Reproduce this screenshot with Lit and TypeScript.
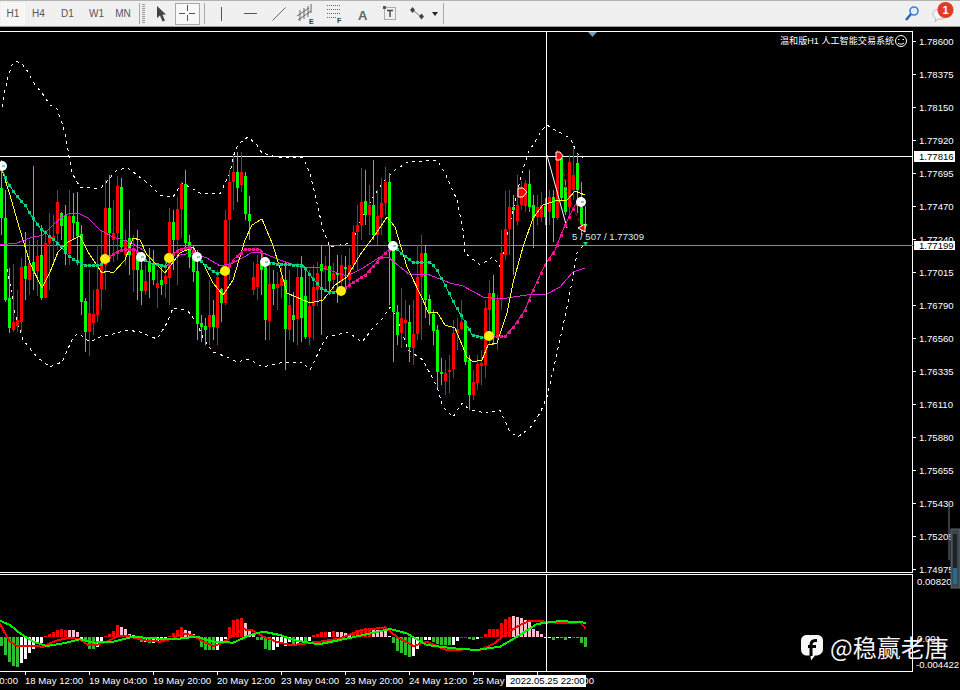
import { LitElement, html, svg, css } from 'lit';
import { customElement } from 'lit/decorators.js';

type Pt = [number, number];

// x, colour, body top, body bottom, wick top, wick bottom
const CANDLES: [number, string, number, number, number, number][] = [
  [1,'g',188,218,160,235],[5,'g',218,300,190,302],[9,'g',298,328,268,333],[13,'r',322,330,264,332],
  [17,'r',320,326,290,332],[21,'r',267,322,258,332],[25,'g',266,279,232,300],[29,'r',263,280,240,295],
  [33,'g',262,271,166,290],[37,'r',256,271,240,296],[41,'g',255,298,225,300],[45,'r',243,298,230,298],
  [49,'r',238,243,213,290],[53,'r',236,240,215,265],[57,'r',202,234,190,250],[61,'g',213,226,212,240],
  [65,'g',215,254,205,265],[69,'r',216,254,190,265],[73,'g',216,223,193,240],[77,'g',222,236,192,265],
  [81,'g',234,302,225,315],[85,'g',301,332,298,352],[89,'r',313,332,270,356],[93,'r',314,323,290,335],
  [97,'r',289,315,245,322],[101,'r',265,289,230,310],[105,'r',208,265,180,290],[109,'g',208,233,175,262],
  [113,'r',233,240,200,262],[117,'r',186,233,176,260],[121,'g',187,247,178,250],[125,'r',240,255,230,265],
  [129,'g',238,255,210,275],[133,'r',248,270,235,292],[137,'g',257,270,230,300],[141,'g',270,291,257,305],
  [145,'r',281,291,265,295],[149,'g',264,272,248,298],[153,'g',263,280,250,285],[157,'r',283,288,270,308],
  [161,'g',280,285,265,295],[165,'r',276,284,262,298],[169,'r',222,278,208,305],[173,'g',222,240,210,270],
  [177,'r',209,240,197,285],[181,'r',184,209,182,238],[185,'g',184,243,170,250],[189,'g',242,257,235,268],
  [193,'g',255,272,245,282],[197,'g',271,324,250,340],[201,'g',323,327,315,342],[205,'g',326,330,318,345],
  [209,'r',315,327,280,345],[213,'g',315,327,300,340],[217,'r',277,328,270,345],[221,'g',289,303,288,322],
  [225,'r',220,303,210,305],[229,'r',182,220,170,280],[233,'r',172,182,155,210],[237,'g',172,188,152,202],
  [241,'r',172,185,152,192],[245,'g',176,214,172,220],[249,'g',214,221,196,240],[253,'r',277,290,262,295],
  [257,'r',264,287,255,300],[261,'g',264,270,250,295],[265,'g',267,320,265,340],[269,'r',284,321,262,340],
  [273,'g',284,289,270,305],[277,'r',284,288,272,310],[281,'r',278,286,267,298],[285,'g',280,329,262,370],
  [289,'r',305,330,270,340],[293,'g',315,320,292,342],[297,'r',277,319,263,345],[301,'g',277,318,256,342],
  [305,'g',296,337,270,339],[309,'r',306,337,270,345],[313,'r',287,306,265,340],[317,'r',273,290,262,306],
  [321,'g',264,271,245,335],[325,'r',266,270,256,290],[329,'g',266,281,245,295],[333,'r',273,280,263,290],
  [337,'g',273,275,255,303],[341,'r',265,281,255,295],[345,'g',267,269,256,287],[349,'r',265,280,248,288],
  [353,'r',232,265,225,270],[357,'r',225,232,205,270],[361,'r',202,225,168,240],[365,'g',201,215,170,225],
  [369,'r',205,215,185,235],[373,'g',205,235,160,240],[377,'r',216,235,190,245],[381,'r',203,217,178,235],
  [385,'r',182,203,167,215],[389,'g',182,242,173,305],[393,'g',247,312,245,362],[397,'g',312,335,305,345],
  [401,'r',318,333,288,348],[405,'r',320,323,300,340],[409,'g',322,347,305,362],[413,'r',334,348,300,365],
  [417,'r',277,334,245,340],[421,'r',253,277,235,340],[425,'g',253,300,245,318],[429,'g',299,314,295,325],
  [433,'g',314,331,310,345],[437,'g',330,372,325,388],[441,'g',372,374,358,385],[445,'r',373,381,360,395],
  [449,'r',370,372,355,393],[453,'r',333,369,320,378],[457,'r',329,333,318,350],[461,'r',322,329,300,330],
  [465,'g',322,362,320,365],[469,'g',360,395,355,410],[473,'r',382,395,370,400],[477,'r',364,383,355,390],
  [481,'r',363,366,350,385],[485,'r',308,365,300,378],[489,'r',293,310,280,345],[493,'g',293,335,275,345],
  [497,'r',300,335,295,350],[501,'r',253,300,230,310],[505,'r',229,255,191,260],[509,'r',207,229,190,255],
  [513,'g',207,210,195,275],[517,'r',205,221,175,225],[521,'r',190,205,181,210],[525,'r',183,206,180,212],
  [529,'g',184,207,170,212],[533,'g',205,218,195,248],[537,'r',207,217,195,225],[541,'r',205,217,192,222],
  [545,'g',206,217,198,225],[549,'r',197,212,190,225],[553,'g',197,218,190,242],[557,'r',155,218,150,220],
  [561,'g',158,198,155,200],[565,'g',187,212,180,215],[569,'r',162,207,155,215],[573,'r',175,190,148,200],
  [577,'g',163,190,155,213],[581,'g',207,225,182,235],[585,'g',224,226,206,228],
];

const BB_UPPER: Pt[] = [[2,107],[5,90],[8,77],[12,65],[16,61],[22,64],[28,72],[33,82],[42,93],[50,105],[57,109],[62,123],[66,137],[68,150],[72,173],[80,187],[100,189],[110,178],[117,170],[128,168],[137,175],[150,185],[160,195],[173,197],[182,183],[195,190],[200,193],[220,194],[230,173],[235,150],[240,143],[248,137],[257,145],[262,153],[277,157],[303,158],[310,173],[317,203],[323,230],[330,247],[340,245],[352,243],[363,215],[373,197],[385,180],[395,170],[408,162],[437,160],[445,173],[457,200],[463,230],[465,253],[480,265],[493,257],[500,267],[510,223],[522,173],[528,153],[542,130],[547,125],[555,130],[570,138],[577,153],[583,158]];
const BB_LOWER: Pt[] = [[5,255],[8,273],[15,313],[23,340],[37,357],[50,367],[62,362],[72,340],[78,333],[90,342],[100,337],[117,333],[127,330],[140,332],[157,339],[167,323],[173,308],[187,310],[197,323],[203,338],[213,352],[227,357],[237,362],[248,359],[263,367],[280,363],[302,362],[310,370],[323,343],[327,337],[348,332],[362,342],[373,328],[383,318],[390,307],[398,320],[408,350],[423,360],[437,387],[443,407],[453,417],[462,403],[470,410],[487,413],[500,410],[510,432],[518,437],[530,428],[540,413],[547,397],[557,353],[567,307],[571,287],[577,253],[585,243]];
const MA_SLOW: Pt[] = [[0,245],[17,243],[30,238],[43,235],[53,225],[62,217],[70,213],[78,213],[88,218],[100,230],[113,237],[130,242],[143,250],[157,265],[165,267],[180,255],[193,253],[207,258],[220,266],[233,263],[253,252],[263,253],[280,260],[300,267],[323,268],[347,276],[363,268],[380,257],[388,257],[410,275],[427,274],[450,283],[463,286],[483,297],[500,299],[527,295],[547,294],[560,287],[573,272],[585,268]];
const MA_FAST: Pt[] = [[2,170],[10,195],[20,230],[30,263],[42,288],[50,272],[58,252],[68,242],[80,236],[88,252],[102,273],[107,271],[113,273],[125,260],[133,238],[140,240],[147,255],[157,265],[165,273],[180,253],[193,247],[203,263],[213,283],[223,295],[233,280],[245,240],[252,225],[262,219],[272,243],[280,268],[287,293],[310,303],[323,300],[335,285],[347,277],[360,255],[375,235],[387,217],[395,227],[407,267],[423,300],[428,312],[437,312],[445,325],[455,328],[467,357],[473,362],[482,360],[488,345],[497,343],[507,313],[513,283],[523,247],[533,218],[543,205],[558,200],[567,200],[575,191],[585,195]];

// trend line, changes colour at every dot
const TEAL: Pt[][] = [
  [[2,170],[8,183],[16,195],[25,205],[33,218],[40,228],[48,235],[60,245],[68,255],[75,260],[85,265],[100,265],[105,259]],
  [[141,257],[150,263],[165,266],[169,258]],
  [[197,257],[205,265],[215,273],[225,271]],
  [[265,262],[280,264],[303,265],[310,275],[320,287],[328,292],[341,291]],
  [[393,246],[405,256],[412,262],[430,262],[437,270],[445,285],[455,305],[465,322],[472,335],[482,337],[489,338]],
];
const PINK: Pt[][] = [
  [[105,259],[115,253],[122,249],[135,249],[141,257]],
  [[169,258],[178,250],[190,247],[197,257]],
  [[225,271],[235,258],[245,249],[260,249],[265,262]],
  [[341,291],[352,283],[365,275],[375,264],[385,253],[393,246]],
  [[489,336],[505,336],[515,325],[525,310],[533,290],[545,265],[555,250],[565,225],[575,205],[581,202]],
];
const YELLOW_DOTS: Pt[] = [[105,259],[169,258],[225,271],[341,291],[489,336]];
const WHITE_DOTS: Pt[] = [[2,166],[141,257],[197,257],[265,262],[393,246],[581,202]];

const PRICES: [string, number][] = [['1.78600',41],['1.78375',74],['1.78150',107],['1.77920',140],['1.77695',173],['1.77470',206],['1.77240',239],['1.77015',272],['1.76790',305],['1.76560',338],['1.76335',371],['1.76110',404],['1.75880',437],['1.75655',470],['1.75430',503],['1.75205',536],['1.74975',569]];

// histogram from x=1, 4px step: colour, value (+ is down)
const HIST: [string, number][] = [
  ['g',9],['g',18],['g',25],['g',29],['g',30],['w',26],['w',22],['w',16],['w',12],['w',7],['w',6],['r',-1],['r',-3],['r',-5],['r',-7],['r',-8],['r',-7],['p',-7],['p',-7],['p',-5],
  ['w',2],['g',5],['g',12],['g',12],['w',10],['w',5],['r',-1],['r',-3],['r',-6],['r',-12],['p',-10],['p',-8],['p',-3],['p',-2],['p',-1],['g',5],['w',5],['g',6],['w',6],['w',5],
  ['w',4],['w',3],['r',-1],['r',-4],['r',-7],['r',-10],['p',-7],['p',-6],['p',-3],['w',2],['g',10],['g',13],['g',13],['g',13],['w',13],['w',5],['w',2],['r',-10],['r',-17],['r',-18],
  ['r',-19],['p',-14],['p',-7],['p',-4],['g',3],['g',3],['g',12],['g',13],['w',13],['w',10],['w',7],['w',9],['w',5],['g',7],['w',7],['w',5],['g',6],['w',4],['r',-2],['r',-3],
  ['r',-5],['r',-5],['w',-5],['r',-6],['p',-5],['p',-5],['p',-4],['p',-3],['r',-5],['r',-7],['r',-8],['r',-9],['r',-9],['p',-8],['p',-7],['p',-7],['p',-6],['w',-1],['g',6],['g',14],
  ['g',16],['g',18],['g',20],['w',19],['w',12],['g',4],['w',3],['w',3],['g',5],['g',7],['g',8],['g',8],['g',8],['w',8],['w',4],['r',1],['r',1],['g',2],['g',3],['w',2],
  ['r',1],['r',-3],['r',-8],['r',-8],['r',-8],['r',-14],['r',-18],['r',-20],['p',-21],['p',-20],['p',-19],['p',-17],['p',-15],['p',-8],['p',-6],['p',-3],['w',1],['w',1],['g',3],['w',1],
  ['g',1],['g',3],['w',1],['r',1],['g',1],['g',6],['g',10],
];

const z5 = (p: number[][]): Pt[] => p.map(([x, y]) => [x / 3, 570 + y / 3]);
const z6 = (p: number[][]): Pt[] => p.map(([x, y]) => [320 + x / 3, 570 + y / 3]);
const SIGNAL_RED: Pt[] = [
  ...z5([[0,160],[15,190],[30,215],[50,228],[90,228],[130,230],[150,220],[175,210],[210,203],[240,208],[265,225],[290,225],[320,215],[350,200],[380,197],[410,205],[440,212],[480,215],[520,205],[550,190],[575,195],[610,215],[640,228],[670,218],[700,195],[730,178],[755,180],[790,200],[830,215],[870,225],[910,222],[950,215]]),
  ...z6([[0,215],[60,205],[120,182],[195,172],[230,200],[280,228],[320,215],[380,240],[440,238],[480,240],[520,222],[560,190],[600,165],[630,152],[680,155],[730,160],[780,157],[797,175]]),
];
const SIGNAL_GREEN: Pt[] = [
  ...z5([[0,152],[30,165],[60,190],[100,215],[140,228],[190,220],[240,208],[280,218],[340,215],[400,200],[460,205],[520,208],[590,200],[640,215],[700,218],[750,195],[790,185],[840,195],[880,210],[950,222]]),
  ...z6([[0,222],[60,210],[130,195],[210,177],[260,190],[320,225],[400,235],[470,240],[540,230],[600,195],[650,162],[720,153],[797,158]]),
];

const TIMES: [string, number][] = [['18 May 12:00',25],['19 May 04:00',89],['19 May 20:00',153],['20 May 12:00',217],['23 May 04:00',281],['23 May 20:00',345],['24 May 12:00',409],['25 May 04:00',473]];

const pts = (p: Pt[]) => p.map(q => q.join(',')).join(' ');

// marker every 4px along the line
function markers(line: Pt[]): Pt[] {
  const out: Pt[] = [];
  for (let i = 0; i < line.length - 1; i++) {
    const [x0, y0] = line[i];
    const [x1, y1] = line[i + 1];
    for (let x = Math.ceil((x0 - 1) / 4) * 4 + 1; x < x1; x += 4) {
      if (x < x0) continue;
      out.push([x, Math.round(y0 + ((y1 - y0) * (x - x0)) / (x1 - x0))]);
    }
  }
  return out;
}

@customElement('app-root')
export class AppRoot extends LitElement {
  static styles = css`
    :host {
      display: block;
      position: relative;
      width: 960px;
      height: 690px;
      background: #000;
      overflow: hidden;
      font-family: "Liberation Sans", Arial, sans-serif;
    }
    .toolbar {
      display: flex;
      align-items: center;
      height: 25px;
      margin-bottom: 2px;
      background: #f0f0f0;
      border-top: 1px solid #b4b4b4;
      border-bottom: 1px solid #a0a0a0;
      box-sizing: content-box;
      color: #555;
      font-size: 10px;
    }
    .toolbar svg { display: block; }
    .tf {
      width: 29px;
      height: 22px;
      display: flex;
      align-items: center;
      justify-content: center;
      box-sizing: border-box;
    }
    .tf.first {
      width: 24px;
      margin-left: 1px;
      border: 1px solid #fbfbfb;
      background: #f6f6f6;
    }
    .tf.h4 { margin-left: -1px; }
    .tf.mn { width: 24px; }
    .sep { width: 1px; height: 21px; margin-left: 4px; background: #a8a8a8; }
    .grip {
      width: 3px;
      height: 19px;
      margin-left: 2px;
      background: repeating-linear-gradient(#999 0 1px, #f0f0f0 1px 2px);
    }
    .tool {
      width: 28px;
      height: 22px;
      display: flex;
      align-items: center;
      justify-content: center;
      box-sizing: border-box;
    }
    .tool.wide { width: 29px; }
    .tool.narrow { width: 27px; }
    .tool.channel { width: 30px; }
    .tool.arrow { margin-left: 1px; }
    .tool.vline { margin-left: 2px; }
    .tool.drop { width: 8px; }
    .tool.active { width: 25px; border: 1px solid #a8a8a8; background: #f8f8f8; }
    .right { margin-left: auto; display: flex; align-items: center; }
    .search { margin-right: 10px; }
    .bubble { margin-right: 5px; }
    .chart svg { display: block; }
    .txt { font-family: "Liberation Sans", Arial, sans-serif; font-size: 9.6px; fill: #fff; }
    .dark { fill: #000; }
    .info { fill: #dce8f2; }
    .title {
      font-family: "Liberation Sans", "Noto Sans CJK SC", sans-serif;
      font-size: 9.1px;
      fill: #fff;
    }
    .badge-text { font-family: "Liberation Sans", Arial, sans-serif; font-size: 11px; font-weight: 700; fill: #fff; }
    .tb-a { font-family: "Liberation Sans", Arial, sans-serif; font-size: 13px; font-weight: 700; fill: #666; }
    .tb-l { font-family: "Liberation Sans", Arial, sans-serif; font-size: 7px; font-weight: 700; fill: #333; }
    .watermark {
      position: absolute;
      left: 800px;
      top: 633px;
      display: flex;
      align-items: center;
      gap: 6px;
      color: #f4f4f4;
      font-family: "Noto Sans CJK SC", "Liberation Sans", sans-serif;
      font-size: 24px;
      line-height: 28px;
      white-space: nowrap;
    }
    .gadget { position: absolute; left: 948px; top: 502px; }
  `;

  private toolbar() {
    return html`<div class="toolbar">
      <div class="tf first">H1</div>
      <div class="tf h4">H4</div>
      <div class="tf">D1</div>
      <div class="tf">W1</div>
      <div class="tf mn">MN</div>
      <div class="sep"></div>
      <div class="grip"></div>
      <div class="tool wide arrow">
        <svg width="14" height="18" viewBox="0 0 14 18"><path d="M3 1 L3 13 L6 10.5 L8.5 16.5 L11 15.5 L8.5 9.8 L12 9.500 Z" fill="#444"/></svg>
      </div>
      <div class="tool active">
        <svg width="17" height="17" viewBox="0 0 17 17"><path d="M0 8.500H6M10 8.500H16M8.500 0V6M8.500 10V16" stroke="#555" fill="none"/></svg>
      </div>
      <div class="sep"></div>
      <div class="tool wide vline">
        <svg width="3" height="14" viewBox="0 0 3 14"><path d="M1.500 0V14" stroke="#555"/></svg>
      </div>
      <div class="tool wide">
        <svg width="13" height="3" viewBox="0 0 13 3"><path d="M0 1.500H13" stroke="#555"/></svg>
      </div>
      <div class="tool narrow">
        <svg width="14" height="14" viewBox="0 0 14 14"><path d="M0.500 13.500L13.500 0.500" stroke="#666"/></svg>
      </div>
      <div class="tool narrow">
        <svg width="18" height="20" viewBox="0 0 18 20">
          <path d="M0 12L12 4M1 16L14 7M3 6L3 17M7 4L7 15M11 2L11 13M14 0L14 9" stroke="#666" fill="none"/>
          <text class="tb-l" x="12" y="20">E</text>
        </svg>
      </div>
      <div class="tool channel">
        <svg width="16" height="19" viewBox="0 0 16 19">
          <path d="M1 1.500H14M1 5.500H14M1 9.500H14M1 13.500H10" stroke="#666" stroke-dasharray="1 1" fill="none"/>
          <text class="tb-l" x="11" y="19">F</text>
        </svg>
      </div>
      <div class="tool narrow">
        <svg width="12" height="14" viewBox="0 0 12 14"><text class="tb-a" x="1" y="12.500">A</text></svg>
      </div>
      <div class="tool narrow">
        <svg width="14" height="15" viewBox="0 0 14 15">
          <rect x="1.500" y="1.500" width="11" height="12" fill="none" stroke="#666" stroke-dasharray="1 1"/>
          <rect x="0" y="0" width="3" height="3" fill="#555"/>
          <path d="M4 4.500H10M7 4.500V11" stroke="#444" stroke-width="1.400" fill="none"/>
        </svg>
      </div>
      <div class="tool">
        <svg width="16" height="15" viewBox="0 0 16 15">
          <path d="M1 4H6L3.500 1ZM1 4H6L3.500 7Z M10 10.500H15L12.500 7.500ZM10 10.500H15L12.500 13.500Z" fill="#444"/>
          <path d="M5 5L11 10" stroke="#777"/>
        </svg>
      </div>
      <div class="tool drop">
        <svg width="6" height="4" viewBox="0 0 6 4"><path d="M0 0H6L3 4Z" fill="#222"/></svg>
      </div>
      <div class="sep"></div>
      <div class="right">
        <svg class="search" width="16" height="18" viewBox="0 0 16 18">
          <circle cx="10" cy="6" r="4" fill="#e4eefa" stroke="#3f7fd0" stroke-width="1.600"/>
          <path d="M7 9L2 15" stroke="#2a62b8" stroke-width="2.400"/>
        </svg>
        <svg class="bubble" width="25" height="25" viewBox="0 0 25 25">
          <path d="M3 13C3 10 6 8 10 8C14 8 17 10 17 13C17 16 14 18 10 18H8L5 21L6 17.500C4 16.500 3 15 3 13Z" fill="#f4f4f4" stroke="#bcbcbc"/>
          <circle cx="15.500" cy="9" r="8" fill="#e03a26"/>
          <text class="badge-text" x="15.500" y="13" text-anchor="middle">1</text>
        </svg>
      </div>
    </div>`;
  }

  private mainPane() {
    const col = (c: string) => (c === 'r' ? '#ff0000' : '#00ff00');
    return html`<svg width="960" height="544" viewBox="0 29 960 544">
      <rect x="0" y="31" width="913" height="1" fill="#fff"/>
      <rect x="912" y="31" width="1" height="541" fill="#fff"/>
      <rect x="0" y="572" width="913" height="1" fill="#fff"/>
      <path d="M588 32H597L592.500 37Z" fill="#7a98b0"/>

      ${PRICES.map(([t, y]) => svg`
        <rect x="913" y=${y} width="3" height="1" fill="#fff"/>
        <text class="txt" x="919" y=${y + 4}>${t}</text>`)}

      <polyline points=${pts(BB_UPPER)} fill="none" stroke="#fff" stroke-dasharray="3 4" shape-rendering="crispEdges"/>
      <polyline points=${pts(BB_LOWER)} fill="none" stroke="#fff" stroke-dasharray="3 4" shape-rendering="crispEdges"/>

      <rect x="0" y="156" width="913" height="1" fill="#fff"/>
      <rect x="0" y="245" width="913" height="1" fill="#8c8c8c"/>

      ${CANDLES.map(([x, c, top, bot, hi, lo]) => svg`
        <rect x=${x} y=${hi} width="1" height=${lo - hi} fill=${col(c)}/>
        <rect x=${x - 1} y=${top} width="3" height=${bot - top} fill=${col(c)}/>`)}

      <path d="M547 155L567 228" stroke="#fff" fill="none"/>
      <path d="M563 167L566 190L572 205L578 218L581 225" stroke="#ff0000" stroke-dasharray="3 3" fill="none"/>

      <polyline points=${pts(MA_SLOW)} fill="none" stroke="#e020e0" shape-rendering="crispEdges"/>
      <polyline points=${pts(MA_FAST)} fill="none" stroke="#ffff20" shape-rendering="crispEdges"/>

      ${TEAL.map(l => svg`<polyline points=${pts(l)} fill="none" stroke="#10d080" shape-rendering="crispEdges"/>
        ${markers(l).map(([x, y]) => svg`<rect x=${x - 1} y=${y - 1} width="3" height="3" fill="#10d080"/>`)}`)}
      ${PINK.map(l => svg`<polyline points=${pts(l)} fill="none" stroke="#e81890" shape-rendering="crispEdges"/>
        ${markers(l).map(([x, y]) => svg`<rect x=${x - 1} y=${y - 1} width="3" height="3" fill="#e81890"/>`)}`)}

      ${YELLOW_DOTS.map(([x, y]) => svg`<circle cx=${x} cy=${y} r="5" fill="#ffee00"/>`)}
      ${WHITE_DOTS.map(([x, y]) => svg`<circle cx=${x} cy=${y} r="5" fill="#fff"/>
        <path d=${`M${x} ${y}h3`} stroke="#10a070"/>`)}

      <path d="M518 188L523 188L527 192L523 197L518 197Z" fill="#ff0000" stroke="#fff"/>
      <path d="M556 152L560 152L563 156L560 160L556 160Z" fill="#ff0000" stroke="#fff"/>
      <path d="M585 224L585 232L578 228Z" fill="#ff0000" stroke="#fff"/>
      <path d="M583 242H588L585.500 246Z" fill="#00e060"/>

      <text class="txt info" x="572" y="240">5 / 507 / 1.77309</text>

      <rect x="914" y="151" width="41" height="11" fill="#fff"/>
      <text class="txt dark" x="919" y="160">1.77816</text>
      <rect x="914" y="241" width="41" height="9" fill="#fff"/>
      <text class="txt dark" x="919" y="249">1.77199</text>

      <text class="title" x="780" y="44" xml:space="preserve">温和版H1 人工智能交易系统</text>
      <circle cx="901" cy="41" r="5.500" fill="none" stroke="#fff"/>
      <path d="M898 39.500h1.500M902.500 39.500h1.500M898 43c1 1.500 5 1.500 6 0" stroke="#fff" fill="none"/>

      <rect x="546" y="31" width="1" height="541" fill="#fff"/>
    </svg>`;
  }

  private indicatorPane() {
    const colors: Record<string, string> = { r: '#ff0000', g: '#2fbe2f', w: '#ffffff', p: '#ffc0cb' };
    return html`<svg width="960" height="99" viewBox="0 573 960 99">
      <rect x="0" y="574" width="913" height="1" fill="#fff"/>
      <rect x="912" y="574" width="1" height="97" fill="#fff"/>
      <rect x="0" y="671" width="913" height="1" fill="#fff"/>

      ${HIST.map(([c, v], i) => svg`<rect x=${4 * i} y=${v < 0 ? 637 + v : 637} width="3" height=${Math.abs(v)} fill=${colors[c]}/>`)}

      <polyline points=${pts(SIGNAL_RED)} fill="none" stroke="#ff0000" stroke-width="2" shape-rendering="crispEdges"/>
      <polyline points=${pts(SIGNAL_GREEN)} fill="none" stroke="#00f000" stroke-width="2" shape-rendering="crispEdges"/>

      <text class="txt" x="917" y="585">0.008202</text>
      <text class="txt" x="917" y="642">0.00</text>
      <text class="txt" x="916" y="668">-0.004422</text>

      <rect x="546" y="574" width="1" height="97" fill="#fff"/>
    </svg>`;
  }

  private timeAxis() {
    return html`<svg width="960" height="18" viewBox="0 672 960 18">
      ${TIMES.map(([t, x]) => svg`
        <rect x=${x} y="672" width="1" height="3" fill="#fff"/>
        <text class="txt" x=${x} y="684">${t}</text>`)}
      <rect x="537" y="672" width="1" height="3" fill="#fff"/>
      <text class="txt" x="18" y="684" text-anchor="end">20:00</text>
      <text class="txt" x="594" y="684" text-anchor="end">00</text>
      <rect x="506" y="675" width="80" height="12" fill="#fff"/>
      <text class="txt dark" x="510" y="684">2022.05.25 22:00</text>
    </svg>`;
  }

  render() {
    return html`
      ${this.toolbar()}
      <div class="chart">
        ${this.mainPane()}
        ${this.indicatorPane()}
        ${this.timeAxis()}
      </div>
      <svg class="gadget" width="12" height="90" viewBox="0 0 12 90">
        <path d="M1 0C1 3 2 2 3 2M1 0V58" stroke="#777" fill="none"/>
        <rect x="3" y="27" width="9" height="59" fill="#3c464c" stroke="#5a666c"/>
        <rect x="5" y="32" width="4" height="50" fill="#1c2428"/>
        <rect x="5" y="66" width="4" height="16" fill="#2a8cc0" opacity="0.7"/>
      </svg>
      <div class="watermark">
        <svg width="24" height="27" viewBox="0 0 24 27">
          <path d="M7 1H17C21 1 23 3.500 23 7V15C23 19 20 21.500 16 21.500H15L11 26.500L10.500 21.500H7C3 21.500 1 19 1 15V7C1 3.500 3 1 7 1Z" fill="#f8f8f8"/>
          <path d="M11 22V11C11 8 12.500 6.500 15.500 6.500H17M8 12.500H16" stroke="#000" stroke-width="3" fill="none"/>
        </svg>
        <span>@稳赢老唐</span>
      </div>
    `;
  }
}
